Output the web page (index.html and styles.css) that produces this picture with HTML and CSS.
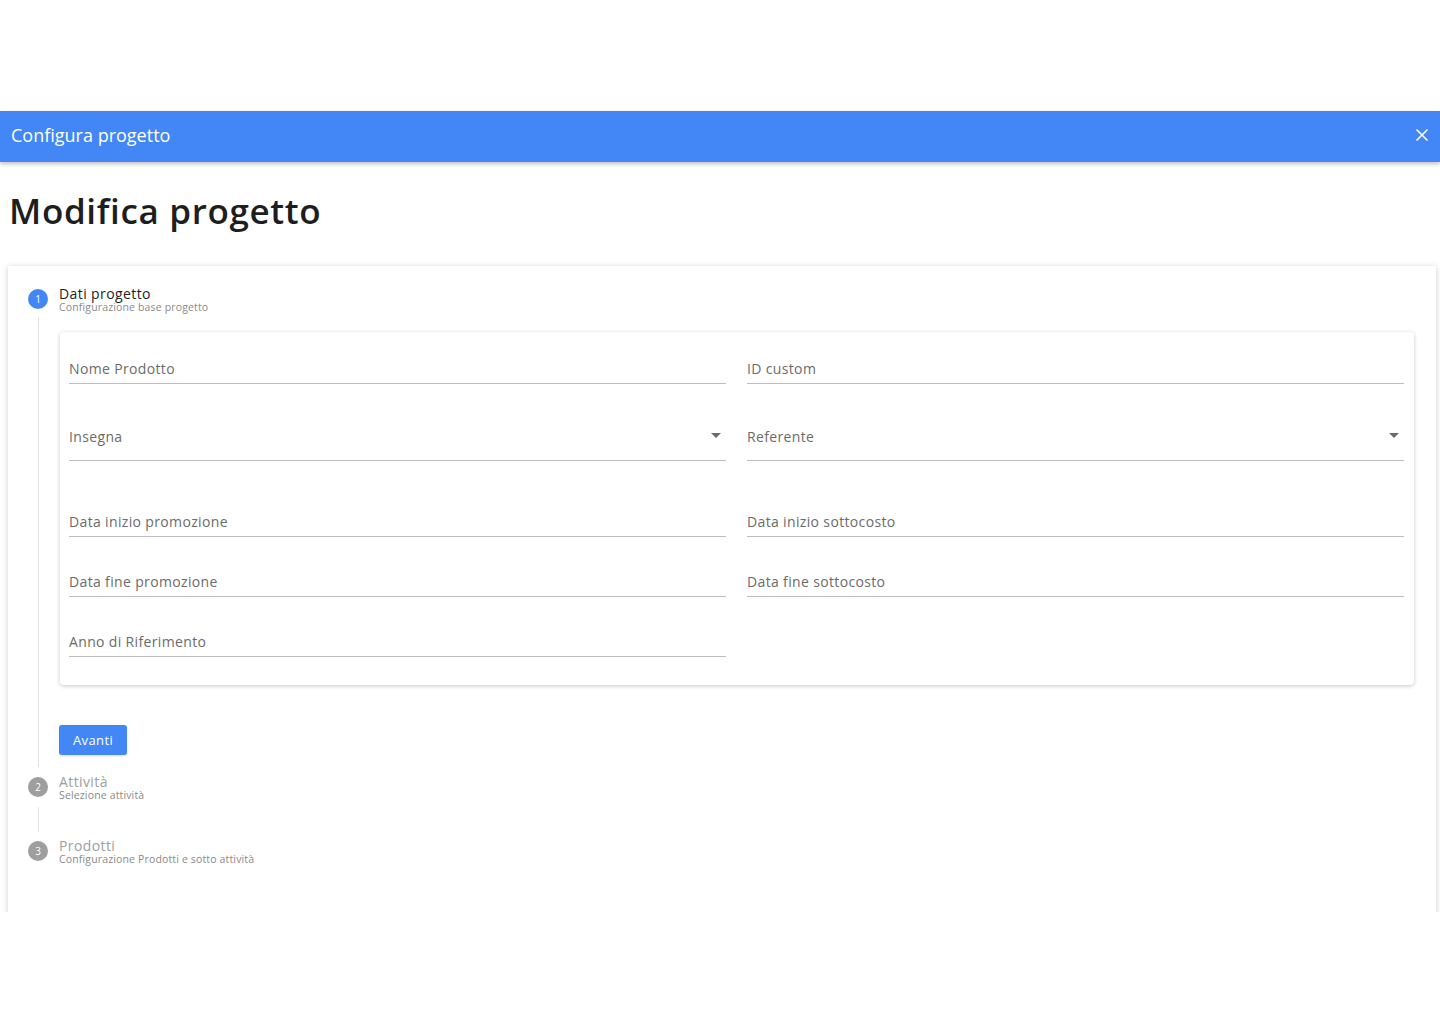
FILE: index.html
```html
<!DOCTYPE html>
<html lang="it">
<head>
<meta charset="utf-8">
<title>Configura progetto</title>
<link rel="stylesheet" href="styles.css">
</head>
<body>
<div class="page">
  <header class="appbar">
    <span class="appbar-title">Configura progetto</span>
    <button class="appbar-close" aria-label="Chiudi">
      <svg width="14" height="14" viewBox="0 0 14 14"><path d="M1.5 1.5 L12.5 12.5 M12.5 1.5 L1.5 12.5" stroke="#fff" stroke-width="1.6" fill="none"/></svg>
    </button>
  </header>

  <h1 class="page-title">Modifica progetto</h1>

  <section class="card">
    <div class="step">
      <div class="step-head">
        <span class="step-num active">1</span>
        <div class="step-text">
          <div class="step-title">Dati progetto</div>
          <div class="step-sub">Configurazione base progetto</div>
        </div>
      </div>
      <div class="step-body">
        <div class="form-card">
          <div class="row">
            <div class="field"><span class="label">Nome Prodotto</span></div>
            <div class="field"><span class="label">ID custom</span></div>
          </div>
          <div class="row row-select">
            <div class="field field-select"><span class="label">Insegna</span><span class="caret"></span></div>
            <div class="field field-select"><span class="label">Referente</span><span class="caret"></span></div>
          </div>
          <div class="row row-wide">
            <div class="field"><span class="label">Data inizio promozione</span></div>
            <div class="field"><span class="label">Data inizio sottocosto</span></div>
          </div>
          <div class="row row-tight">
            <div class="field"><span class="label">Data fine promozione</span></div>
            <div class="field"><span class="label">Data fine sottocosto</span></div>
          </div>
          <div class="row row-tight">
            <div class="field"><span class="label">Anno di Riferimento</span></div>
            <div></div>
          </div>
        </div>
        <button class="btn-primary">Avanti</button>
      </div>
    </div>

    <div class="step">
      <div class="step-head">
        <span class="step-num">2</span>
        <div class="step-text">
          <div class="step-title muted">Attività</div>
          <div class="step-sub">Selezione attività</div>
        </div>
      </div>
      <div class="step-body empty"></div>
    </div>

    <div class="step">
      <div class="step-head">
        <span class="step-num">3</span>
        <div class="step-text">
          <div class="step-title muted">Prodotti</div>
          <div class="step-sub">Configurazione Prodotti e sotto attività</div>
        </div>
      </div>
    </div>
  </section>
</div>
</body>
</html>
```

FILE: styles.css
```css
* { box-sizing: border-box; }
html, body { margin: 0; padding: 0; background: #fff; }
body {
  font-family: "Open Sans", "Noto Sans", "DejaVu Sans", sans-serif;
  color: #212121;
}
.page {
  height: 912px;
  overflow: hidden;
  padding-top: 111px;
}
.appbar {
  height: 51px;
  background: #4287f5;
  box-shadow: 0 2px 4px rgba(0,0,0,0.25);
  display: flex;
  align-items: center;
  justify-content: space-between;
  padding: 0 11px 0 11px;
  position: relative;
  z-index: 1;
}
.appbar-title {
  color: #fff;
  font-size: 18px;
  font-weight: 400;
  padding-bottom: 4px;
}
.appbar-close {
  background: none;
  border: 0;
  padding: 0;
  width: 14px;
  height: 14px;
  display: flex;
  margin-bottom: 3px;
}
.page-title {
  margin: 28px 0 0 9px;
  font-size: 35px;
  line-height: 42px;
  font-weight: 600;
  color: #1e1e1e;
  letter-spacing: 0.65px;
}
.card {
  margin: 34px 4px 0 8px;
  background: #fff;
  box-shadow: 0 1px 6px rgba(0,0,0,0.2);
  padding: 23px 22px 60px 20px;
}
.step-head {
  display: flex;
  align-items: center;
  gap: 11px;
  height: 20px;
}
.step-num {
  width: 20px;
  height: 20px;
  border-radius: 50%;
  background: #9e9e9e;
  color: #fff;
  font-size: 10px;
  display: flex;
  align-items: center;
  justify-content: center;
  flex: none;
}
.step-num.active { background: #4287f5; }
.step-text { display: flex; flex-direction: column; padding-top: 1px; }
.step-title {
  font-size: 14px;
  line-height: 15px;
  letter-spacing: 0.4px;
  color: #1e1e1e;
}
.step-title.muted { color: #9e9e9e; }
.step-sub {
  font-size: 10.5px;
  line-height: 12px;
  letter-spacing: 0.15px;
  color: #8a8a8a;
}
.step-body {
  margin: 8px 0 10px 10px;
  border-left: 1px solid #e0e0e0;
  padding: 15px 0 12px 20px;
}
.step-body.empty {
  margin: 10px 0 9px 10px;
  height: 25px;
  padding: 0;
}
.form-card {
  margin: 0 0 0 1px;
  border-radius: 4px;
  box-shadow: 0 1px 4px rgba(0,0,0,0.22);
  padding: 12px 10px 28px 9px;
}
.row {
  display: grid;
  grid-template-columns: 1fr 1fr;
  column-gap: 21px;
}
.row-select { margin-top: 37px; }
.row-wide { margin-top: 36px; }
.row-tight { margin-top: 20px; }
.field {
  height: 40px;
  border-bottom: 1px solid #bdbdbd;
  display: flex;
  align-items: flex-end;
  justify-content: space-between;
  padding-bottom: 5px;
}
.field-select { padding-bottom: 14px; }
.label {
  font-size: 14px;
  line-height: 18px;
  letter-spacing: 0.35px;
  color: #6b6b6b;
}
.caret {
  width: 0;
  height: 0;
  border-left: 5px solid transparent;
  border-right: 5px solid transparent;
  border-top: 5px solid #6b6b6b;
  margin: 0 5px 8px 0;
}
.btn-primary {
  margin-top: 40px;
  height: 30px;
  width: 68px;
  background: #4287f5;
  color: #fff;
  border: 0;
  border-radius: 3px;
  font-family: inherit;
  font-size: 13px;
  letter-spacing: 0.4px;
  display: block;
  padding: 0;
  box-shadow: 0 1px 2px rgba(0,0,0,0.15);
}
```
